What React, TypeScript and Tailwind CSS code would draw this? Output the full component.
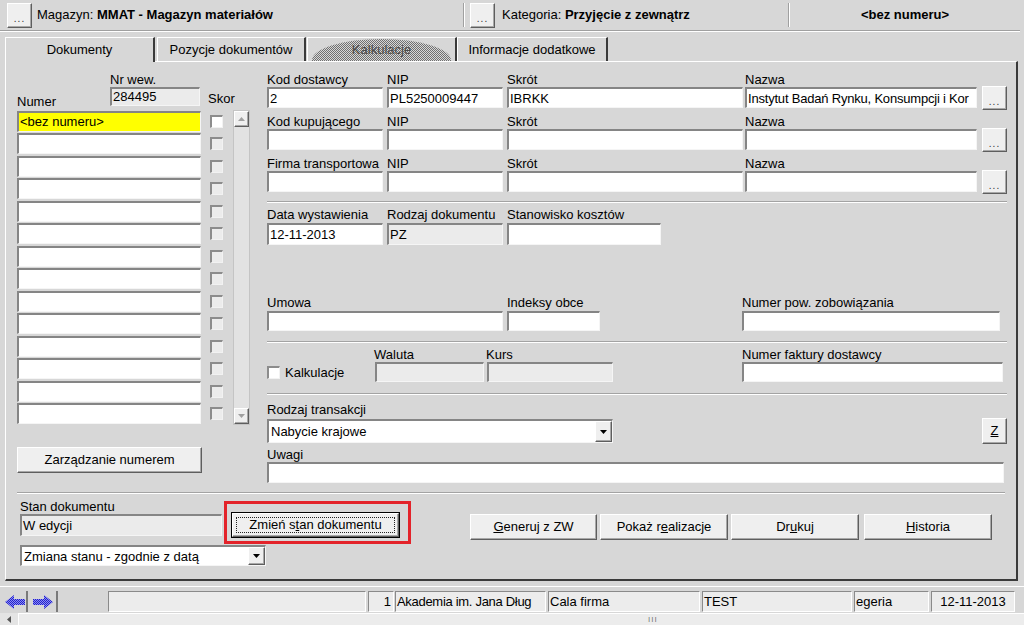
import React from "react";

const sunk =
  "box-border border-t-2 border-l-2 border-b border-r border-t-[#858585] border-l-[#858585] border-b-[#f5f5f5] border-r-[#f5f5f5]";
const raised =
  "box-border border border-t-white border-l-white border-b-[#5e5e5e] border-r-[#5e5e5e] shadow-[inset_-1px_-1px_0_#a8a8a8] bg-[#efefef]";
const thin =
  "box-border border border-t-[#8a8a8a] border-l-[#8a8a8a] border-b-white border-r-white bg-[#ececec]";

function Field({ c = "", gray = false, children }: { c?: string; gray?: boolean; children?: React.ReactNode }) {
  return (
    <div
      className={`${sunk} ${gray ? "bg-[#ebebeb]" : "bg-white"} flex items-center pl-[1px] overflow-hidden whitespace-nowrap leading-[15px] shrink-0 ${c}`}
    >
      {children}
    </div>
  );
}

function Btn({ c = "", children }: { c?: string; children?: React.ReactNode }) {
  return <div className={`${raised} flex items-center justify-center whitespace-nowrap shrink-0 ${c}`}>{children}</div>;
}

function L({ c = "", children }: { c?: string; children?: React.ReactNode }) {
  return <div className={`h-[15px] leading-[15px] whitespace-nowrap shrink-0 ${c}`}>{children}</div>;
}

function Sep({ c = "" }: { c?: string }) {
  return <div className={`h-[2px] border-t border-t-[#a3a3a3] border-b border-b-white box-border ${c}`} />;
}

function Select({ c = "", children }: { c?: string; children?: React.ReactNode }) {
  return (
    <div className={`${sunk} bg-white flex items-center shrink-0 ${c}`}>
      <span className="flex-1 pl-[2px] whitespace-nowrap overflow-hidden leading-[15px]">{children}</span>
      <div className={`${raised} w-[17px] h-full flex items-center justify-center`}>
        <svg width="7" height="4" viewBox="0 0 7 4">
          <path d="M0 0h7L3.5 4z" fill="#000" />
        </svg>
      </div>
    </div>
  );
}

function Chk({ white = false }: { white?: boolean }) {
  return (
    <div
      className={`w-[13px] h-[13px] box-border border-t-2 border-l-2 border-b border-r border-t-[#8c8c8c] border-l-[#8c8c8c] border-b-[#f2f2f2] border-r-[#f2f2f2] ${white ? "bg-white" : "bg-[#ececec]"} shrink-0`}
    />
  );
}

function Dots() {
  return <span className="text-[10px] leading-[10px] tracking-[1px] text-[#333] mt-[8px]">...</span>;
}

function Arrow({ dir }: { dir: "l" | "r" }) {
  const pts = dir === "l" ? "0,7 9,0 9,4 20,4 20,10 9,10 9,14" : "20,7 11,0 11,4 0,4 0,10 11,10 11,14";
  return (
    <svg width="20" height="14" viewBox="0 0 20 14">
      <defs>
        <pattern id={`dith${dir}`} width="2" height="2" patternUnits="userSpaceOnUse">
          <rect width="2" height="2" fill="#8a8af5" />
          <rect width="1" height="1" fill="#2424c8" />
          <rect x="1" y="1" width="1" height="1" fill="#2424c8" />
        </pattern>
      </defs>
      <polygon points={pts} fill={`url(#dith${dir})`} />
    </svg>
  );
}

export default function App() {
  const rows = Array.from({ length: 14 }, (_, i) => i);
  return (
    <div className="w-[1024px] h-[625px] overflow-hidden bg-[#d7d7d7] text-[13px] text-black font-['Liberation_Sans',Arial,sans-serif] flex flex-col">
      {/* Top bar */}
      <div className="h-[31px] w-[1020px] flex items-center border-b border-b-[#a0a0a0] shadow-[0_1px_0_#ffffff] shrink-0">
        <Btn c="ml-[7px] w-[25px] h-[25px]">
          <Dots />
        </Btn>
        <div className="ml-[5px] w-[426px] whitespace-nowrap">
          Magazyn: <b>MMAT - Magazyn materiałów</b>
        </div>
        <div className="w-[2px] h-[24px] border-l border-l-[#a0a0a0] border-r border-r-white box-border" />
        <Btn c="ml-[5px] w-[25px] h-[25px]">
          <Dots />
        </Btn>
        <div className="ml-[7px] w-[286px] whitespace-nowrap">
          Kategoria: <b>Przyjęcie z zewnątrz</b>
        </div>
        <div className="w-[2px] h-[24px] border-l border-l-[#a0a0a0] border-r border-r-white box-border" />
        <div className="flex-1 text-center font-bold">&lt;bez numeru&gt;</div>
      </div>

      {/* Tabs */}
      <div className="mt-[5px] h-[25px] flex items-end pl-[5px] shrink-0">
        <div className="relative z-10 -mb-[1px] w-[150px] h-[25px] box-border border-t border-l border-t-white border-l-white border-r-2 border-r-[#3a3a3a] bg-[#d7d7d7] flex items-center justify-center">
          Dokumenty
        </div>
        <div className="ml-[2px] w-[149px] h-[24px] box-border border-t border-l border-t-white border-l-white border-r-2 border-r-[#3a3a3a] flex items-center justify-center">
          Pozycje dokumentów
        </div>
        <div className="relative ml-[1px] w-[150px] h-[24px] box-border border-t border-l border-t-white border-l-white border-r-2 border-r-[#3a3a3a] flex items-center justify-center overflow-hidden">
          <div className="absolute left-[4px] right-[4px] top-[1px] bottom-0 rounded-tl-[72px_22px] rounded-tr-[72px_22px] bg-[repeating-conic-gradient(#707070_0_25%,transparent_0_50%)] bg-[length:2px_2px]" />
          <span className="relative text-[#4a4a4a]">Kalkulacje</span>
        </div>
        <div className="w-[151px] h-[24px] box-border border-t border-l border-t-white border-l-white border-r-2 border-r-[#3a3a3a] flex items-center justify-center">
          Informacje dodatkowe
        </div>
      </div>

      {/* Panel */}
      <div className="ml-[5px] w-[1013px] h-[520px] box-border border border-t-white border-l-white border-r-2 border-b-2 border-r-[#3a3a3a] border-b-[#3a3a3a] flex flex-col shrink-0">
        <div className="flex pl-[11px]">
          {/* Left column */}
          <div className="w-[233px] flex flex-col shrink-0">
            <div className="h-[48px] flex items-end">
              <div className="w-[93px] pb-[1px] leading-[15px]">Numer</div>
              <div className="w-[90px] flex flex-col mb-[4px]">
                <L>Nr wew.</L>
                <Field gray c="w-[90px] h-[19px] !items-start">284495</Field>
              </div>
              <div className="ml-[8px] mb-[4px] leading-[15px]">Skor</div>
            </div>
            <div className="flex">
              <div className="flex flex-col">
                {rows.map((i) => (
                  <div key={i} className="h-[22.5px] flex items-center">
                    <Field c={`w-[184px] h-[21px] ${i === 0 ? "!bg-[#ffff00]" : ""}`}>{i === 0 ? "<bez numeru>" : ""}</Field>
                    <div className="ml-[9px]">
                      <Chk white={i === 0} />
                    </div>
                  </div>
                ))}
              </div>
              <div className="ml-[10px] w-[17px] h-[315px] box-border border border-[#c4c4c4] bg-[#e2e2e2] flex flex-col">
                <div className={`${raised} h-[16px] flex items-center justify-center`}>
                  <svg width="7" height="4" viewBox="0 0 7 4">
                    <path d="M0 4h7L3.5 0z" fill="#a0a0a0" />
                  </svg>
                </div>
                <div className="flex-1" />
                <div className={`${raised} h-[16px] flex items-center justify-center`}>
                  <svg width="7" height="4" viewBox="0 0 7 4">
                    <path d="M0 0h7L3.5 4z" fill="#a0a0a0" />
                  </svg>
                </div>
              </div>
            </div>
            <Btn c="mt-[22px] w-[185px] h-[26px]">Zarządzanie numerem</Btn>
          </div>

          {/* Right column */}
          <div className="ml-[17px] w-[741px] flex flex-col pt-[10px] shrink-0">
            {[
              ["Kod dostawcy", "2", "PL5250009447", "IBRKK", "Instytut Badań Rynku, Konsumpcji i Kor"],
              ["Kod kupującego", "", "", "", ""],
              ["Firma transportowa", "", "", "", ""],
            ].map((r, i) => (
              <div key={i} className={i === 0 ? "" : "mt-[6px]"}>
                <div className="flex">
                  <L c="w-[120px]">{r[0]}</L>
                  <L c="w-[120px]">NIP</L>
                  <L c="w-[238px]">Skrót</L>
                  <L>Nazwa</L>
                </div>
                <div className="flex items-center h-[21px]">
                  <Field c="w-[116px] h-[21px]">{r[1]}</Field>
                  <Field c="ml-[4px] w-[116px] h-[21px]">{r[2]}</Field>
                  <Field c="ml-[4px] w-[236px] h-[21px]">{r[3]}</Field>
                  <Field c="ml-[2px] w-[232px] h-[21px] tracking-[-0.2px]">{r[4]}</Field>
                  <Btn c="ml-[5px] w-[25px] h-[24px]">
                    <Dots />
                  </Btn>
                </div>
              </div>
            ))}
            <Sep c="mt-[9px] w-[740px]" />
            <div className="mt-[4px] flex">
              <L c="w-[120px]">Data wystawienia</L>
              <L c="w-[120px]">Rodzaj dokumentu</L>
              <L>Stanowisko kosztów</L>
            </div>
            <div className="mt-[1px] flex">
              <Field c="w-[116px] h-[22px]">12-11-2013</Field>
              <Field gray c="ml-[4px] w-[116px] h-[22px]">PZ</Field>
              <Field c="ml-[4px] w-[154px] h-[22px]" />
            </div>

            <div className="mt-[50px] flex">
              <L c="w-[240px]">Umowa</L>
              <L c="w-[235px]">Indeksy obce</L>
              <L>Numer pow. zobowiązania</L>
            </div>
            <div className="mt-[1px] flex">
              <Field c="w-[236px] h-[20px]" />
              <Field c="ml-[4px] w-[93px] h-[20px]" />
              <Field c="ml-[142px] w-[258px] h-[20px]" />
            </div>
            <Sep c="mt-[10px] w-[740px]" />

            <div className="mt-[4px] flex items-end">
              <div className="w-[107px] h-[20px] flex items-center">
                <Chk white />
                <span className="ml-[5px] leading-[15px]">Kalkulacje</span>
              </div>
              <div className="w-[112px] flex flex-col">
                <L>Waluta</L>
                <Field gray c="ml-[1px] w-[109px] h-[20px]" />
              </div>
              <div className="w-[127px] flex flex-col">
                <L>Kurs</L>
                <Field gray c="ml-[1px] w-[126px] h-[20px]" />
              </div>
              <div className="ml-[129px] flex flex-col">
                <L>Numer faktury dostawcy</L>
                <Field c="w-[261px] h-[20px]" />
              </div>
            </div>
            <Sep c="mt-[11px] w-[740px]" />

            <L c="mt-[7px]">Rodzaj transakcji</L>
            <div className="mt-[1px] h-[26px] flex items-center">
              <Select c="w-[346px] h-[24px]">Nabycie krajowe</Select>
              <Btn c="ml-auto mr-[1px] w-[25px] h-[26px]">
                <span className="underline">Z</span>
              </Btn>
            </div>
            <L c="mt-[3px]">Uwagi</L>
            <Field c="w-[737px] h-[21px]" />
          </div>
        </div>

        <Sep c="mt-[9px] ml-[11px] w-[988px]" />

        {/* Bottom section */}
        <div className="ml-[14px] flex flex-col">
          <div className="mt-[5px] flex items-start">
            <div className="w-[202px] flex flex-col">
              <L>Stan dokumentu</L>
              <Field gray c="w-[202px] h-[22px]">W edycji</Field>
            </div>
            <div className="ml-[2px] mt-[2px] w-[187px] h-[43px] box-border border-[3px] border-[#e3232a] pl-[4px] pt-[8px]">
              <div className="w-[169px] h-[26px] box-border border border-black">
                <div className={`${raised} w-full h-full flex items-center justify-center`}>
                  <div className="w-[159px] h-[16px] box-border border border-dotted border-[#222] flex items-center justify-center leading-[14px] whitespace-nowrap">
                    Zmień s<span className="underline">t</span>an dokumentu
                  </div>
                </div>
              </div>
            </div>
            <div className="ml-[59px] mt-[15px] flex">
              <Btn c="w-[127px] h-[26px]">
                <span className="underline">G</span>eneruj z ZW
              </Btn>
              <Btn c="ml-[3px] w-[128px] h-[26px]">
                Pokaż r<span className="underline">e</span>alizacje
              </Btn>
              <Btn c="ml-[3px] w-[128px] h-[26px]">
                Dr<span className="underline">u</span>kuj
              </Btn>
              <Btn c="ml-[5px] w-[128px] h-[26px]">
                <span className="underline">H</span>istoria
              </Btn>
            </div>
          </div>
          <Select c="mt-[1px] w-[246px] h-[21px]">Zmiana stanu - zgodnie z datą</Select>
        </div>
      </div>

      {/* Status area */}
      <div className="mt-[5px] h-[1px] bg-white w-full shrink-0" />
      <div className="mt-[4px] h-[21px] flex items-stretch shrink-0">
        <div className="ml-[3px] w-[25px] box-border border-r-2 border-r-[#7a7a7a] flex items-center justify-center">
          <Arrow dir="l" />
        </div>
        <div className="ml-[2px] w-[28px] box-border border-r-2 border-r-[#7a7a7a] flex items-center justify-center">
          <Arrow dir="r" />
        </div>
        <div className={`${thin} ml-[50px] w-[258px]`} />
        <div className={`${thin} ml-[2px] w-[26px] text-right pr-[2px] leading-[19px]`}>1</div>
        <div className={`${thin} ml-[1px] w-[151px] pl-[1px] leading-[19px] whitespace-nowrap overflow-hidden tracking-[-0.3px]`}>Akademia im. Jana Dług</div>
        <div className={`${thin} ml-[2px] w-[152px] pl-[1px] leading-[19px]`}>Cala firma</div>
        <div className={`${thin} ml-[2px] w-[150px] pl-[1px] leading-[19px]`}>TEST</div>
        <div className={`${thin} ml-[2px] w-[75px] pl-[1px] leading-[19px]`}>egeria</div>
        <div className={`${thin} ml-[2px] w-[84px] text-center leading-[19px]`}>12-11-2013</div>
      </div>
      <div className="mt-[1px] h-[12px] flex shrink-0 bg-[#e4e4e4]">
        <div className="w-[18px] flex items-center justify-center">
          <svg width="4" height="7" viewBox="0 0 4 7">
            <path d="M4 0v7L0 3.5z" fill="#555" />
          </svg>
        </div>
        <div className="flex-1 box-border border-t border-l border-t-white border-l-white bg-[#ececec] flex items-center pl-[629px]">
          <span className="text-[8px] leading-[8px] text-[#777] tracking-[1px]">III</span>
        </div>
      </div>
    </div>
  );
}
